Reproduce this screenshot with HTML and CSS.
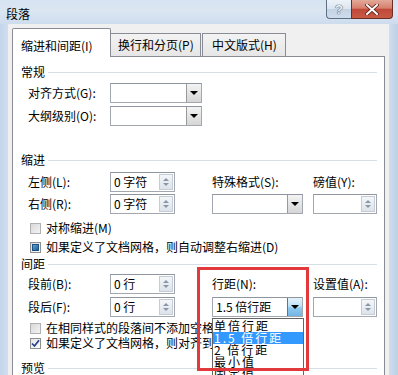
FILE: index.html
```html
<!DOCTYPE html>
<html lang="zh-CN">
<head>
<meta charset="utf-8">
<title>段落</title>
<link rel="stylesheet" href="styles.css">
</head>
<body>
<div class="window">
  <div class="titlebar">
    <span class="title">段落</span>
    <div class="caption-btns">
      <div class="cbtn help">?</div>
      <div class="cbtn close">
        <svg width="14" height="11" viewBox="0 0 14 11"><path d="M2 1 L12 10 M12 1 L2 10" stroke="#5a1d16" stroke-width="3.6" stroke-linecap="square"/><path d="M2 1 L12 10 M12 1 L2 10" stroke="#ffffff" stroke-width="2" stroke-linecap="square"/></svg>
      </div>
    </div>
  </div>
  <div class="client">
    <div class="tabs">
      <div class="tab active">缩进和间距(I)</div>
      <div class="tab">换行和分页(P)</div>
      <div class="tab">中文版式(H)</div>
    </div>
    <div class="panel">
      <div class="group g1"><span>常规</span><i class="rule"></i></div>
      <div class="row r-align">
        <span class="lbl">对齐方式(G):</span>
        <div class="select w92"><span class="val"></span><b class="dd"><i class="tri"></i></b></div>
      </div>
      <div class="row r-outline">
        <span class="lbl">大纲级别(O):</span>
        <div class="select w92"><span class="val"></span><b class="dd"><i class="tri"></i></b></div>
      </div>

      <div class="group g2"><span>缩进</span><i class="rule"></i></div>
      <div class="row r-a1">
        <span class="lbl">左侧(L):</span>
        <div class="spin w65"><span class="val">0 字符</span><b class="sb"><i class="up"></i><i class="dn"></i></b></div>
        <span class="lbl">特殊格式(S):</span>
        <span class="lbl">磅值(Y):</span>
      </div>
      <div class="row r-a2">
        <span class="lbl">右侧(R):</span>
        <div class="spin w65"><span class="val">0 字符</span><b class="sb"><i class="up"></i><i class="dn"></i></b></div>
        <div class="select w91"><span class="val"></span><b class="dd"><i class="tri"></i></b></div>
        <div class="spin w64"><span class="val"></span><b class="sb"><i class="up"></i><i class="dn"></i></b></div>
      </div>
      <div class="check c1"><i class="box dis"></i><span>对称缩进(M)</span></div>
      <div class="check c2"><i class="box mixed"><i class="fill"></i></i><span>如果定义了文档网格，则自动调整右缩进(D)</span></div>

      <div class="group g3"><span>间距</span><i class="rule"></i></div>
      <div class="row r-b1">
        <span class="lbl">段前(B):</span>
        <div class="spin w65"><span class="val">0 行</span><b class="sb"><i class="up"></i><i class="dn"></i></b></div>
        <span class="lbl">行距(N):</span>
        <span class="lbl">设置值(A):</span>
      </div>
      <div class="row r-b2">
        <span class="lbl">段后(F):</span>
        <div class="spin w65"><span class="val">0 行</span><b class="sb"><i class="up"></i><i class="dn"></i></b></div>
        <div class="select w91 open"><span class="val">1.5 倍行距</span><b class="dd"><i class="tri"></i></b></div>
        <div class="spin w64"><span class="val"></span><b class="sb"><i class="up"></i><i class="dn"></i></b></div>
      </div>
      <div class="check c3"><i class="box dis"></i><span>在相同样式的段落间不添加空格(C)</span></div>
      <div class="check c4"><i class="box on"><svg width="9" height="9" viewBox="0 0 9 9"><path d="M1 4.5 L3.5 7 L8 1.2" fill="none" stroke="#27418a" stroke-width="1.7"/></svg></i><span>如果定义了文档网格，则对齐到网格(W)</span></div>

      <div class="group g4"><span>预览</span><i class="rule"></i></div>
    </div>
  </div>

  <ul class="droplist">
    <li>单倍行距</li>
    <li class="sel">1.5 倍行距</li>
    <li>2 倍行距</li>
    <li>最小值</li>
    <li>固定值</li>
  </ul>
  <div class="redbox"></div>
</div>
</body>
</html>
```

FILE: styles.css
```css
* { box-sizing: border-box; }
html, body { margin: 0; padding: 0; }
body {
  width: 398px;
  height: 375px;
  overflow: hidden;
  font-family: "Noto Sans CJK SC", "Liberation Sans", sans-serif;
  font-size: 12px;
  color: #000;
}
.window {
  position: relative;
  width: 398px;
  height: 375px;
  overflow: hidden;
  background: linear-gradient(90deg, #c3d5ea 0px, #cfdeef 8px, #cfdeef 389px, #bdd0e6 398px);
  display: flex;
  flex-direction: column;
}
.titlebar {
  height: 24px;
  flex: none;
  display: flex;
  align-items: flex-start;
  background: linear-gradient(180deg, #d6e3f1 0%, #dbe6f2 45%, #cddcee 100%);
}
.title {
  margin: 4px 0 0 6px;
  font-size: 12px;
  line-height: 20px;
  color: #000;
}
.caption-btns {
  margin-left: auto;
  margin-right: 5px;
  display: flex;
}
.cbtn {
  height: 19px;
  display: flex;
  align-items: center;
  justify-content: center;
  border: 1px solid #5f6f82;
  border-top: none;
}
.help {
  width: 25px;
  border-radius: 0 0 0 4px;
  border-right: none;
  background: linear-gradient(180deg, #eef3f9 0%, #dbe5f0 48%, #c4d3e4 52%, #cfdced 100%);
  color: #f4f4f4;
  font-family: "Liberation Sans", sans-serif;
  font-weight: bold;
  font-size: 13px;
  text-shadow: 0 0 1px #2d3a4a, 0 0 1px #2d3a4a;
}
.close {
  width: 42px;
  border-radius: 0 0 4px 0;
  border-color: #6b2d25;
  background: linear-gradient(180deg, #e2a999 0%, #d6806d 45%, #c0493a 52%, #c75a45 100%);
}

.client {
  flex: 1;
  margin: 0 9px 0 8px;
  padding: 4px 4px 0 4px;
  background: #f0f0f0;
  display: flex;
  flex-direction: column;
}
.tabs {
  display: flex;
  align-items: flex-end;
  height: 28px;
  flex: none;
}
.tab {
  height: 23px;
  padding: 0 7px;
  border: 1px solid #898c95;
  border-bottom: none;
  background: linear-gradient(180deg, #f3f3f3, #e6e6e6);
  line-height: 22px;
  white-space: nowrap;
  margin-left: -1px;
  width: 92px;
}
.tab.active {
  position: relative;
  z-index: 2;
  margin-left: 0;
  height: 29px;
  margin-bottom: -1px;
  width: 99px;
  padding-left: 8px;
  background: #fff;
  line-height: 34px;
  border-radius: 2px 2px 0 0;
}
.tab:nth-child(2) { width: 91px; }
.tab:nth-child(3) { width: 84px; margin-left: 1px; padding-left: 9px; }

.panel {
  flex: 1;
  background: #fff;
  border: 1px solid #898c95;
  display: flex;
  flex-direction: column;
}

.group {
  display: flex;
  align-items: center;
  height: 14px;
  padding: 0 7px 0 8px;
  line-height: 14px;
}
.group .rule {
  flex: 1;
  height: 1px;
  background: #d5dfe5;
  margin-left: 3px;
}
.g1 { margin-top: 8px; }
.g2 { margin-top: 27px; }
.g3 { margin-top: 4px; }
.g4 { margin-top: 12px; }

.row {
  display: grid;
  grid-template-columns: 82px 102px 101px 63px;
  align-items: center;
  height: 20px;
  padding-left: 15px;
}
.lbl { white-space: nowrap; line-height: 20px; }
.r-align { margin-top: 4px; }
.r-outline { margin-top: 3px; }
.r-a1 { margin-top: 5px; }
.r-a2 { margin-top: 2px; }
.r-b1 { margin-top: 3px; }
.r-b2 { margin-top: 3px; }

.select, .spin {
  height: 20px;
  border: 1px solid #a3a8b0;
  border-top-color: #8f959e;
  background: #fff;
  display: flex;
  align-items: stretch;
}
.w92 { width: 92px; }
.w91 { width: 91px; }
.w65 { width: 65px; }
.w64 { width: 64px; }
.val {
  flex: 1;
  padding-left: 3px;
  line-height: 18px;
  white-space: nowrap;
}
.dd {
  width: 15px;
  border-left: 1px solid #9a9a9a;
  background: linear-gradient(180deg, #f4f4f4 0%, #e4e4e4 50%, #d6d6d6 100%);
  display: flex;
  align-items: center;
  justify-content: center;
}
.tri {
  width: 0;
  height: 0;
  border-left: 4px solid transparent;
  border-right: 4px solid transparent;
  border-top: 4px solid #000;
}
.open .dd {
  border-left-color: #3c7fb1;
  background: linear-gradient(180deg, #e3f2fc 0%, #bde2f8 45%, #8fcaf0 55%, #72b4e3 100%);
}
.sb {
  width: 14px;
  margin: 1px 1px 1px 0;
  display: flex;
  flex-direction: column;
  background: linear-gradient(180deg, #f4f6f8, #dde3ea);
  border: 1px solid #c5ccd5;
  align-items: center;
  justify-content: space-around;
  padding: 2px 0;
}
.sb .up, .sb .dn {
  width: 0;
  height: 0;
  border-left: 3px solid transparent;
  border-right: 3px solid transparent;
}
.sb .up { border-bottom: 3px solid #8a97a8; }
.sb .dn { border-top: 3px solid #8a97a8; }

.check {
  display: flex;
  align-items: center;
  height: 12px;
  padding-left: 17px;
  white-space: nowrap;
  line-height: 12px;
}
.check span { margin-left: 5px; }
.c1 { margin-top: 8px; }
.c2 { margin-top: 7px; }
.c3 { margin-top: 5px; }
.c4 { margin-top: 3px; }
.box {
  flex: none;
  width: 11px;
  height: 11px;
  border: 1px solid #8e8f8f;
  background: linear-gradient(135deg, #dcdcdc, #fbfbfb);
  display: flex;
  align-items: center;
  justify-content: center;
}
.box.dis {
  border-color: #b1b1b1;
  background: linear-gradient(135deg, #d8d8d8, #f4f4f4);
}
.box .fill {
  width: 7px;
  height: 7px;
  background: linear-gradient(135deg, #5aa6dc, #1e5c97);
  border: 1px solid #1d4f80;
}
.box.on {
  background: linear-gradient(135deg, #e4e4e4, #ffffff);
}

.droplist {
  position: absolute;
  z-index: 5;
  left: 212px;
  top: 318px;
  width: 92px;
  height: 70px;
  margin: 0;
  padding: 1px 0 0 0;
  list-style: none;
  background: #fff;
  border: 1px solid #646464;
  font-size: 12px;
  letter-spacing: 2px;
  overflow: hidden;
}
.droplist li {
  height: 12px;
  line-height: 12px;
  padding-left: 1px;
  white-space: nowrap;
}
.droplist li.sel {
  background: #3399ff;
  color: #fff;
}
.redbox {
  position: absolute;
  z-index: 6;
  left: 197px;
  top: 267px;
  width: 112px;
  height: 104px;
  border: 3px solid #e2393c;
}
```
